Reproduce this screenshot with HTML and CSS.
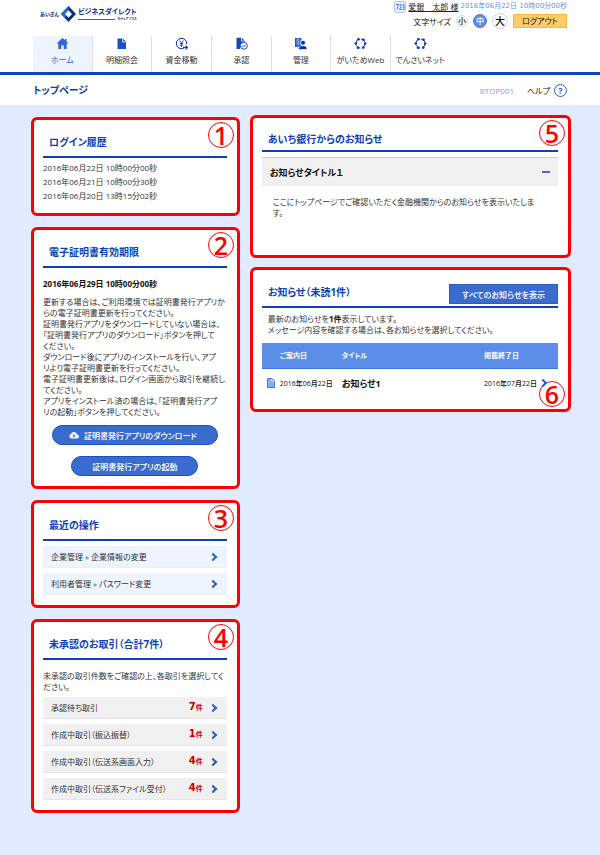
FILE: index.html
```html
<!DOCTYPE html>
<html lang="ja">
<head>
  <meta charset="UTF-8" />
  <meta name="viewport" content="width=device-width, initial-scale=1.0"/>
  <title>トップページ</title>
  <link rel="stylesheet" href="styles.css">
</head>
<body>

  <!-- Header -->
  <header class="header">
    <div class="header-top">
      <a class="logo" href="#">
        <span class="logo-bank">あいぎん</span>
        <svg class="logo-mark" width="15" height="16" viewBox="0 0 15 16">
          <path d="M7.5 0 15 8 7.5 16 0 8z" fill="#0c2a86"/>
          <path d="M7.5 0 0 8l3.5 3.8L7.5 8z" fill="#1f6fc4"/>
          <path d="M7.5 4.2 11 8l-3.5 3.8L4 8z" fill="#fff"/>
        </svg>
        <span class="logo-name">
          <span class="logo-title">ビジネスダイレクト</span>
          <span class="logo-sub">セキュアプラス</span>
        </span>
      </a>
      <div class="header-tools">
        <div class="user">
          <svg width="12" height="12" viewBox="0 0 12 12" fill="none" stroke="#4c7de0">
            <rect x=".5" y=".5" width="11" height="11" rx="2" fill="#eaf2ff" stroke="#a9c4f5"/>
            <path d="M2 3.5h2.500L3 8.500M5.500 3.500h1.500v2l-1.500 3h2M8.500 3.500h1.500v5H8.500M8.500 6H10"/>
          </svg>
          <a class="user-name" href="#">愛銀　太郎 様</a>
          <span class="user-date">2016年06月22日 10時00分00秒</span>
        </div>
        <div class="tools">
          <span>文字サイズ</span>
          <button type="button" class="size size-s">小</button>
          <button type="button" class="size size-m">中</button>
          <button type="button" class="size size-l">大</button>
          <button type="button" class="logout">ログアウト</button>
        </div>
      </div>
    </div>

    <nav class="nav">
      <a class="active" href="#">
        <svg width="13" height="13" viewBox="0 0 13 13" fill="#2f66d0"><path d="M6.500 1 .5 6.500h1.800V12h3V8.300h2.400V12h3V6.500h1.800L10.500 4.500V2H9v1.200z"/></svg>
        ホーム
      </a>
      <a href="#">
        <svg width="13" height="13" viewBox="0 0 13 13"><path d="M2.500 1.500h5.300L11 4.700V12H2.500z" fill="#1d50c4"/><path d="M7.500 2v3h3" fill="none" stroke="#cfe0ff"/></svg>
        明細照会
      </a>
      <a href="#">
        <svg width="13" height="13" viewBox="0 0 13 13" fill="none" stroke="#0a2db8"><path d="M9.500 10.800A5.200 5.200 0 1 1 11.700 7.200"/><path d="M4.500 3.500l2 2.700 2-2.700M6.500 6v4M4.700 6.500h3.600M4.700 8.200h3.600" stroke-width=".8"/><path d="M8 10.500h4.200M10.600 8.700l1.800 1.800-1.800 1.800" stroke-width="1.200"/></svg>
        資金移動
      </a>
      <a href="#">
        <svg width="13" height="13" viewBox="0 0 13 13"><path d="M1.500.800h5.200L9.500 3.600V6L5 8.500V12H1.500z" fill="#1747be"/><path d="M6.500 1v3h3" stroke="#fff" stroke-width=".8" fill="none"/><circle cx="8.800" cy="8.800" r="3.500" fill="#fff" stroke="#1747be"/><path d="m7.200 8.800 1.200 1.200 2.200-2.300" fill="none" stroke="#1747be"/></svg>
        承認
      </a>
      <a href="#">
        <svg width="13" height="13" viewBox="0 0 13 13"><path d="M1 1h6.500v9H1z" fill="#2453c6"/><path d="M2 3h4.500M2 5h4.500M2 7h4.500M4 1v9" stroke="#a9c2f5" stroke-width=".7"/><circle cx="9" cy="5.700" r="2.500" fill="#0a2db8" stroke="#fff"/><path d="M4.500 12.500c0-3 2-3.800 4.500-3.800s4 .8 4 3.800z" fill="#0a2db8" stroke="#fff" stroke-width=".6"/></svg>
        管理
      </a>
      <a href="#">
        <svg width="13" height="13" viewBox="0 0 13 13" fill="none" stroke="#0a2db8"><circle cx="6.500" cy="6.500" r="4.600" stroke-dasharray="5 2.200"/><g fill="#0a2db8" stroke="none"><circle cx="4.500" cy="2.300" r="1.300"/><circle cx="9.500" cy="2.800" r="1.300"/><circle cx="1.800" cy="6.500" r="1.300"/><circle cx="11.200" cy="6.500" r="1.300"/><circle cx="4" cy="10.700" r="1.300"/><circle cx="9.300" cy="10.600" r="1.300"/></g></svg>
        がいためWeb
      </a>
      <a href="#">
        <svg width="13" height="13" viewBox="0 0 13 13" fill="none" stroke="#0a2db8"><circle cx="6.500" cy="6.500" r="4.600" stroke-dasharray="5 2.200"/><g fill="#0a2db8" stroke="none"><circle cx="4.500" cy="2.300" r="1.300"/><circle cx="9.500" cy="2.800" r="1.300"/><circle cx="1.800" cy="6.500" r="1.300"/><circle cx="11.200" cy="6.500" r="1.300"/><circle cx="4" cy="10.700" r="1.300"/><circle cx="9.300" cy="10.600" r="1.300"/></g></svg>
        でんさいネット
      </a>
    </nav>
  </header>

  <!-- Page title -->
  <div class="title-bar">
    <h1>トップページ</h1>
    <span class="page-id">BTOP001</span>
    <a class="help" href="#">ヘルプ <span class="help-icon">?</span></a>
  </div>

  <main class="main">
    <div class="column">

      <!-- Login history -->
      <section class="card">
        <span class="badge">1</span>
        <h2>ログイン履歴</h2>
        <ul class="history">
          <li>2016年06月22日 10時00分00秒</li>
          <li>2016年06月21日 10時00分30秒</li>
          <li>2016年06月20日 13時15分02秒</li>
        </ul>
      </section>

      <!-- Certificate -->
      <section class="card">
        <span class="badge">2</span>
        <h2>電子証明書有効期限</h2>
        <p class="expiry">2016年06月29日 10時00分00秒</p>
        <p class="cert-text">
          更新する場合は、ご利用環境では証明書発行アプリか<br>らの電子証明書更新を行ってください。<br>
          証明書発行アプリをダウンロードしていない場合は、<br>「証明書発行アプリのダウンロード」ボタンを押して<br>ください。<br>
          ダウンロード後にアプリのインストールを行い、アプ<br>リより電子証明書更新を行ってください。<br>
          電子証明書更新後は、ログイン画面から取引を継続し<br>てください。<br>
          アプリをインストール済の場合は、「証明書発行アプ<br>リの起動」ボタンを押してください。
        </p>
        <div class="cert-buttons">
          <button type="button" class="pill pill-wide">
            <svg width="10" height="8" viewBox="0 0 10 8"><path d="M2.500 7.500a2.300 2.300 0 0 1-.4-4.500 3.100 3.100 0 0 1 5.900.5 2 2 0 0 1-.1 4z" fill="#fff"/><path d="M5 2.800v3M3.500 4.600 5 6.200l1.500-1.600" fill="none" stroke="#3a6cd0"/></svg>
            証明書発行アプリのダウンロード
          </button>
          <button type="button" class="pill">証明書発行アプリの起動</button>
        </div>
      </section>

      <!-- Recent operations -->
      <section class="card">
        <span class="badge">3</span>
        <h2>最近の操作</h2>
        <ul class="rows rows-blue">
          <li><a href="#"><span>企業管理 » 企業情報の変更</span><i class="chevron"></i></a></li>
          <li><a href="#"><span>利用者管理 » パスワード変更</span><i class="chevron"></i></a></li>
        </ul>
      </section>

      <!-- Pending transactions -->
      <section class="card">
        <span class="badge">4</span>
        <h2>未承認のお取引（合計7件）</h2>
        <p class="pending-text">未承認の取引件数をご確認の上、各取引を選択してく<br>ださい。</p>
        <ul class="rows">
          <li><a href="#"><span>承認待ち取引</span><b class="count">7<small>件</small></b><i class="chevron"></i></a></li>
          <li><a href="#"><span>作成中取引（振込振替）</span><b class="count">1<small>件</small></b><i class="chevron"></i></a></li>
          <li><a href="#"><span>作成中取引（伝送系画面入力）</span><b class="count">4<small>件</small></b><i class="chevron"></i></a></li>
          <li><a href="#"><span>作成中取引（伝送系ファイル受付）</span><b class="count">4<small>件</small></b><i class="chevron"></i></a></li>
        </ul>
      </section>
    </div>

    <div class="column column-right">

      <!-- Bank news -->
      <section class="card card-news">
        <span class="badge">5</span>
        <h2>あいち銀行からのお知らせ</h2>
        <button type="button" class="accordion">お知らせタイトル１<i class="minus"></i></button>
        <p class="news-text">ここにトップページでご確認いただく金融機関からのお知らせを表示いたしま<br>す。</p>
      </section>

      <!-- Messages -->
      <section class="card card-messages">
        <span class="badge badge-bottom">6</span>
        <div class="card-head">
          <h2>お知らせ（未読1件）</h2>
          <button type="button" class="show-all">すべてのお知らせを表示</button>
        </div>
        <p class="messages-text">最新のお知らせを<b>1件</b>表示しています。<br>メッセージ内容を確認する場合は、各お知らせを選択してください。</p>
        <table class="messages">
          <thead>
            <tr><th class="col-date">ご案内日</th><th class="col-title">タイトル</th><th class="col-end">掲載終了日</th></tr>
          </thead>
          <tbody>
            <tr>
              <td>
                <div class="cell-date">
                  <svg width="8" height="10" viewBox="0 0 8 10"><path d="M.5.5h4.500L7.500 3v6.500h-7z" fill="#86adf3" stroke="#3f78de"/><path d="M4.800.8v2.500h2.500" fill="none" stroke="#fff" stroke-width=".7"/></svg>
                  2016年06月22日
                </div>
              </td>
              <td class="cell-title"><a href="#">お知らせ1</a></td>
              <td><div class="cell-end">2016年07月22日<i class="chevron"></i></div></td>
            </tr>
          </tbody>
        </table>
      </section>
    </div>
  </main>

</body>
</html>
```

FILE: styles.css
```css
* {
  box-sizing: border-box;
}

body {
  margin: 0;
  min-height: 100vh;
  background-color: #e0ebff;
  color: #333;
  font-family: "Open Sans", "Noto Sans CJK JP", sans-serif;
  font-size: 8px;
  line-height: 11px;
  font-feature-settings: "palt";
}

h1, h2, p, ul {
  margin: 0;
  padding: 0;
}

ul {
  list-style: none;
}

a {
  color: inherit;
  text-decoration: none;
}

button {
  margin: 0;
  padding: 0;
  font: inherit;
  font-feature-settings: inherit;
  color: inherit;
  cursor: pointer;
}

svg {
  flex: none;
}

/* Header */
.header {
  background-color: #fff;
  padding: 0 33px;
  border-bottom: 3px solid #0a47b4;
}

.header-top {
  display: flex;
  justify-content: space-between;
  height: 36px;
}

.logo {
  display: flex;
  align-items: center;
  gap: 2px;
  height: 28px;
  padding-left: 7px;
  color: #0c1f86;
  font-weight: 700;
}

.logo-bank {
  font-size: 5px;
}

.logo-name {
  display: flex;
  flex-direction: column;
}

.logo-title {
  font-size: 7px;
  line-height: 10px;
}

.logo-sub {
  display: flex;
  align-items: center;
  gap: 2px;
  font-size: 3px;
  line-height: 4px;
}

.logo-sub::before {
  content: "";
  flex: 1;
  height: 1px;
  background-color: #3c5cb0;
}

.header-tools {
  display: flex;
  flex-direction: column;
  align-items: flex-end;
}

.user {
  display: flex;
  align-items: center;
  gap: 2px;
  height: 13px;
}

.user-name {
  color: #222;
  text-decoration: underline;
}

.user-date {
  color: #6b93e6;
  font-family: "DejaVu Sans", "Noto Sans CJK JP", sans-serif;
  font-size: 7px;
}

.tools {
  display: flex;
  align-items: center;
  gap: 5px;
  height: 16px;
  color: #111;
}

.size {
  width: 14px;
  height: 14px;
  border: 1px solid #c5d9fa;
  border-radius: 50%;
  background-color: #fff;
  line-height: 12px;
  font-weight: 500;
}

.size-s {
  width: 12px;
  height: 12px;
  line-height: 10px;
}

.size-m {
  background-color: #5c8ee6;
  border-color: #4a7bd8;
  color: #fff;
}

.size-l {
  width: 16px;
  height: 16px;
  line-height: 14px;
  font-size: 10px;
}

.logout {
  width: 54px;
  height: 14px;
  border: 1px solid #fdb933;
  background-color: #ffcb6b;
  line-height: 12px;
}

/* Navigation */
.nav {
  display: flex;
  width: 78%;
}

.nav a {
  flex: 1 1 0;
  display: flex;
  flex-direction: column;
  align-items: center;
  gap: 4px;
  height: 36px;
  padding-top: 1px;
  border-right: 1px solid #ddd;
  white-space: nowrap;
}

.nav a:last-child {
  border-right: none;
}

.nav .active {
  background-color: #edf4ff;
  color: #2f66d0;
}

/* Title bar */
.title-bar {
  display: flex;
  align-items: center;
  height: 30px;
  padding: 0 33px;
  background-color: #fff;
}

.title-bar h1 {
  flex: 1;
  color: #0f3fb5;
  font-size: 10px;
  font-weight: 700;
}

.page-id {
  margin-right: 13px;
  color: #7f9fe4;
}

.help {
  display: flex;
  align-items: center;
  gap: 4px;
  color: #111;
}

.help-icon {
  width: 13px;
  height: 13px;
  border: 1px solid #2a5fd0;
  border-radius: 50%;
  color: #2a5fd0;
  font-size: 9px;
  font-weight: 700;
  line-height: 11px;
  text-align: center;
}

/* Layout */
.main {
  display: grid;
  grid-template-columns: 13fr 20fr;
  align-items: start;
  gap: 10px;
  padding: 10px 29px 40px 31px;
}

.column {
  display: flex;
  flex-direction: column;
  gap: 11px;
  min-width: 0;
  padding-top: 2px;
}

.column-right {
  gap: 9px;
  padding-top: 0;
}

/* Cards */
.card {
  position: relative;
  padding: 0 10px 10px 9px;
  border: 3px solid #ff0000;
  border-radius: 6px;
  background-color: #fff;
}

.card h2 {
  padding: 15px 6px 7px;
  border-bottom: 2px solid #0f3fb5;
  color: #0f3fb5;
  font-size: 10px;
  font-weight: 700;
  line-height: 14px;
}

.badge {
  position: absolute;
  top: 2px;
  right: 3px;
  width: 26px;
  height: 26px;
  border: 1px solid #ff0000;
  border-radius: 50%;
  color: #ff0000;
  font-family: "Open Sans", sans-serif;
  font-size: 25px;
  font-weight: 600;
  line-height: 24px;
  text-align: center;
}

.badge-bottom {
  top: auto;
  bottom: 2px;
}

.history {
  padding-top: 3px;
  line-height: 14px;
}

.expiry {
  margin-top: 10px;
  color: #111;
  font-weight: 700;
}

.cert-text {
  margin-top: 7px;
  white-space: nowrap;
}

.cert-buttons {
  display: flex;
  flex-direction: column;
  align-items: center;
  gap: 11px;
  margin-top: 8px;
}

.pill {
  display: flex;
  align-items: center;
  justify-content: center;
  gap: 5px;
  height: 20px;
  padding: 0 20px;
  border: 1px solid #1a4fc0;
  border-radius: 10px;
  background-color: #3a6cd0;
  color: #fff;
  font-weight: 500;
}

.pill-wide {
  padding: 0 20px 0 16px;
}

/* Link rows */
.rows {
  display: flex;
  flex-direction: column;
  gap: 5px;
  margin-top: 5px;
}

.rows a {
  display: flex;
  align-items: center;
  height: 22px;
  padding: 0 11px 0 8px;
  border-bottom: 1px solid #e6e6e6;
  background-color: #f0f0f0;
}

.rows-blue a {
  border-bottom-color: #e6effe;
  background-color: #eef4ff;
}

.rows span {
  flex: 1;
}

.count {
  display: flex;
  align-items: baseline;
  margin-right: 7px;
  color: #c00000;
  font-family: "DejaVu Sans", "Noto Sans CJK JP", sans-serif;
  font-size: 10px;
}

.count small {
  font-size: 7px;
}

.chevron {
  width: 6px;
  height: 6px;
  border-top: 2px solid #2a5cc8;
  border-right: 2px solid #2a5cc8;
  transform: rotate(45deg);
}

.pending-text {
  margin-top: 10px;
  white-space: nowrap;
}

/* News */
.card-news {
  padding-bottom: 37px;
}

.card-news h2 {
  padding: 14px 6px 4px;
}

.accordion {
  display: flex;
  align-items: center;
  justify-content: space-between;
  width: 100%;
  height: 29px;
  margin-top: 5px;
  padding: 0 8px;
  border: none;
  border-top: 1px solid #d0d0d0;
  background-color: #f0f0f0;
  color: #111;
  font-size: 9px;
  font-weight: 700;
}

.minus {
  width: 8px;
  height: 2px;
  background-color: #3a6cd0;
}

.news-text {
  margin-top: 10px;
  padding-left: 11px;
}

/* Messages */
.card-messages {
  padding-bottom: 11px;
}

.card-head {
  display: flex;
  align-items: flex-end;
  justify-content: space-between;
  border-bottom: 2px solid #0f3fb5;
}

.card-head h2 {
  border-bottom: none;
}

.show-all {
  height: 20px;
  margin-bottom: 2px;
  padding: 0 12px;
  border: 1px solid #2a5cc8;
  background-color: #3a6cd0;
  color: #fff;
  font-weight: 500;
}

.messages-text {
  margin-top: 5px;
  padding-left: 6px;
}

.messages-text b {
  color: #111;
}

.messages {
  width: 100%;
  margin-top: 8px;
  border-collapse: collapse;
  font-size: 7px;
}

.messages th {
  height: 25px;
  padding: 0;
  border-bottom: 1px solid #3f78de;
  background-color: #5c8ee9;
  color: #fff;
  text-align: left;
}

.messages td {
  height: 30px;
  padding: 0;
  color: #111;
  font-weight: 500;
}

.messages .col-date {
  width: 27%;
  padding-left: 18px;
}

.messages .col-end {
  width: 25%;
}

.cell-date {
  display: flex;
  align-items: center;
  gap: 5px;
  padding-left: 5px;
}

.messages .cell-title {
  font-size: 9px;
  font-weight: 700;
}

.cell-end {
  display: flex;
  align-items: center;
  gap: 3px;
}
```
